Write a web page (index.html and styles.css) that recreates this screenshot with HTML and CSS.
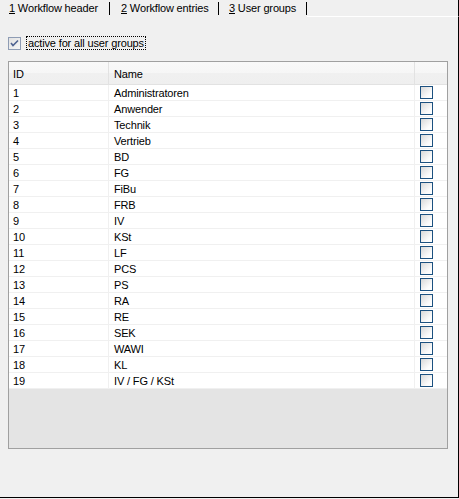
FILE: index.html
```html
<!DOCTYPE html>
<html>
<head lang="en">
    <meta charset="UTF-8">
    <title>User groups</title>
    <link rel="stylesheet" href="styles.css">
</head>
<body>
<div class="tabs">
    <div class="tab tab-1"><u>1</u> Workflow header</div>
    <div class="tab tab-2"><u>2</u> Workflow entries</div>
    <div class="tab tab-3"><u>3</u> User groups</div>
    <div class="tab-rest"></div>
</div>
<div class="page">
    <div class="all-groups">
        <span class="check checked">
            <svg width="9" height="9" viewBox="0 0 9 9"><path d="M1 4 L3 6.5 L8 1.5" fill="none" stroke="#4f6391" stroke-width="1.6"/></svg>
        </span>
        <span class="all-label">active for all user groups</span>
    </div>
    <div class="grid">
        <div class="row head">
            <div class="cell">ID</div>
            <div class="cell">Name</div>
            <div class="cell"></div>
        </div>
        <div class="row"><div class="cell">1</div><div class="cell">Administratoren</div><div class="cell"><span class="box"></span></div></div>
        <div class="row"><div class="cell">2</div><div class="cell">Anwender</div><div class="cell"><span class="box"></span></div></div>
        <div class="row"><div class="cell">3</div><div class="cell">Technik</div><div class="cell"><span class="box"></span></div></div>
        <div class="row"><div class="cell">4</div><div class="cell">Vertrieb</div><div class="cell"><span class="box"></span></div></div>
        <div class="row"><div class="cell">5</div><div class="cell">BD</div><div class="cell"><span class="box"></span></div></div>
        <div class="row"><div class="cell">6</div><div class="cell">FG</div><div class="cell"><span class="box"></span></div></div>
        <div class="row"><div class="cell">7</div><div class="cell">FiBu</div><div class="cell"><span class="box"></span></div></div>
        <div class="row"><div class="cell">8</div><div class="cell">FRB</div><div class="cell"><span class="box"></span></div></div>
        <div class="row"><div class="cell">9</div><div class="cell">IV</div><div class="cell"><span class="box"></span></div></div>
        <div class="row"><div class="cell">10</div><div class="cell">KSt</div><div class="cell"><span class="box"></span></div></div>
        <div class="row"><div class="cell">11</div><div class="cell">LF</div><div class="cell"><span class="box"></span></div></div>
        <div class="row"><div class="cell">12</div><div class="cell">PCS</div><div class="cell"><span class="box"></span></div></div>
        <div class="row"><div class="cell">13</div><div class="cell">PS</div><div class="cell"><span class="box"></span></div></div>
        <div class="row"><div class="cell">14</div><div class="cell">RA</div><div class="cell"><span class="box"></span></div></div>
        <div class="row"><div class="cell">15</div><div class="cell">RE</div><div class="cell"><span class="box"></span></div></div>
        <div class="row"><div class="cell">16</div><div class="cell">SEK</div><div class="cell"><span class="box"></span></div></div>
        <div class="row"><div class="cell">17</div><div class="cell">WAWI</div><div class="cell"><span class="box"></span></div></div>
        <div class="row"><div class="cell">18</div><div class="cell">KL</div><div class="cell"><span class="box"></span></div></div>
        <div class="row"><div class="cell">19</div><div class="cell">IV / FG / KSt</div><div class="cell"><span class="box"></span></div></div>
    </div>
</div>
</body>
</html>
```

FILE: styles.css
```css
*{
    margin: 0;
    padding: 0;
    box-sizing: border-box;
}
body{
    width: 459px;
    height: 499px;
    background: #f0f0f0;
    font: 11px "Liberation Sans", Arial, sans-serif;
    letter-spacing: -0.15px;
    color: #000;
}
.tabs{
    display: flex;
    height: 17px;
}
.tab{
    margin-top: 2px;
    height: 13px;
    line-height: 12px;
    border-right: 1px solid #000;
    white-space: nowrap;
}
.tab-1{
    width: 110px;
    padding-left: 9px;
}
.tab-2{
    width: 109px;
    padding-left: 11px;
}
.tab-3{
    width: 88px;
    padding-left: 10px;
}
.tab-rest{
    flex: 1;
    border-bottom: 1px solid #fff;
    border-right: 1px solid #000;
}
.page{
    height: 481px;
    border-right: 1px solid #000;
    border-bottom: 1px solid #000;
    padding: 19px 0 0 8px;
}
.all-groups{
    display: flex;
    align-items: center;
    height: 14px;
}
.check{
    width: 13px;
    height: 13px;
    border: 1px solid #8e9cb4;
    background: linear-gradient(135deg, #e2e2e2, #f6f6f6);
    display: flex;
    align-items: center;
    justify-content: center;
}
.all-label{
    margin-left: 5px;
    padding: 0 1px;
    height: 14px;
    line-height: 12px;
    border: 1px dotted #000;
}
.grid{
    margin-top: 11px;
    width: 440px;
    height: 388px;
    border: 1px solid #a0a0a0;
    background: #e4e4e4;
}
.row{
    display: grid;
    grid-template-columns: 100px 306px 32px;
    height: 16px;
    background: #fff;
    border-bottom: 1px solid #f0f0f0;
}
.cell{
    border-right: 1px solid #f0f0f0;
    padding: 1px 0 0 4px;
    line-height: 15px;
    white-space: nowrap;
}
.cell:last-child{
    border-right: none;
    padding: 1px 0 0 5px;
}
.row .cell:nth-child(2){
    padding-left: 5px;
}
.row.head{
    height: 23px;
    background: linear-gradient(#f9f9f9 0, #f6f6f6 50%, #f0f0f0 51%, #efefef 100%);
    border-bottom: 1px solid #e2e2e2;
}
.head .cell{
    line-height: 22px;
    border-right-color: #e2e2e2;
}
.head .cell:last-child{
    border-right: none;
}
.box{
    display: block;
    width: 13px;
    height: 13px;
    border: 1px solid #1c5180;
    background: linear-gradient(135deg, #d8d8d8, #fbfbfb 70%, #fff);
}
```
